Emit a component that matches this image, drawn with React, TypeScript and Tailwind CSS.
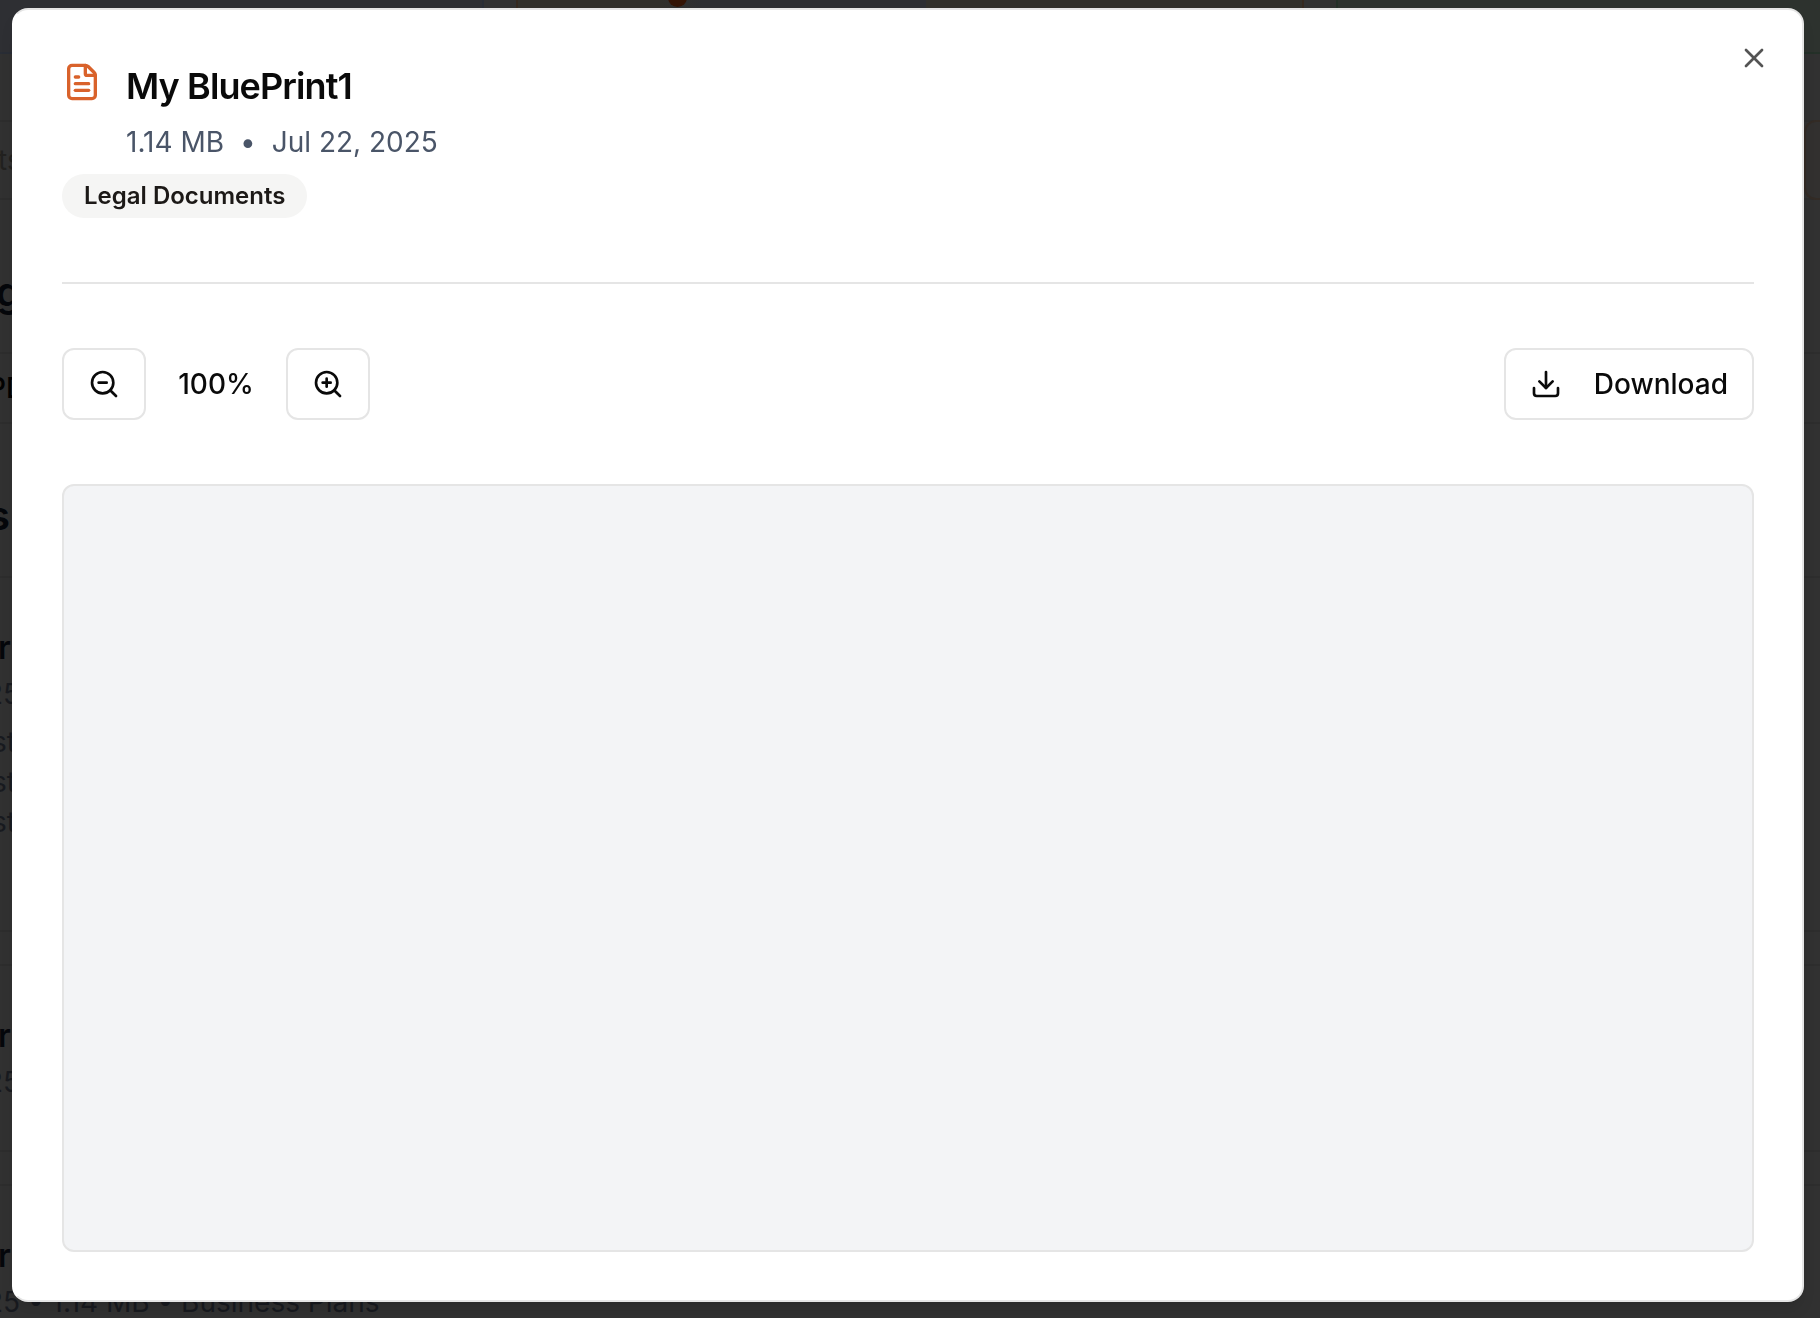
import { Download, FileText, X, ZoomIn, ZoomOut } from "lucide-react";

const lines = ["st", "st", "st"];

function Backdrop() {
  return (
    <div aria-hidden="true" className="flex h-screen flex-col overflow-hidden whitespace-nowrap bg-[#313131] text-[28px] leading-10 text-[#181a1f]">
      <div className="flex h-[54px] shrink-0 justify-center gap-8">
        <div className="w-[788px] shrink-0 border-2 border-t-0 border-[#292d35] bg-[#2e2f33]" />
        <div className="flex w-[788px] shrink-0 border-2 border-t-0 border-[#35291f] bg-[#32302b]">
          <div className="flex w-[408px] bg-gradient-to-r from-[#32302b] from-35% to-[#2d2e32] to-45% pl-[150px]">
            <div className="-mt-3 size-[19px] rounded-full bg-[#341405]" />
          </div>
        </div>
        <div className="w-[788px] shrink-0 border-2 border-t-0 border-[#243028] bg-[#2d322e]" />
      </div>
      <div className="h-[68px] shrink-0 border-b-2 border-[#2d2d2d]" />
      <div className="flex h-[78px] shrink-0 items-center justify-between border-b-2 border-[#2d2d2d] text-[#22211f]">
        <span className="-ml-0.5">ts</span>
        <span className="h-20 w-4 shrink-0 rounded-l-xl border-2 border-r-0 border-[#332b25] bg-[#32302f]" />
      </div>
      <div className="flex h-[154px] shrink-0 items-center border-b-2 border-[#2d2d2d] pt-8 text-[40px] font-semibold text-[#05070b]">
        <span className="-ml-1">g</span>
      </div>
      <div className="flex h-[70px] shrink-0 items-center border-b-2 border-[#2d2d2d] font-medium text-[#020202]">
        <span className="-ml-3">PD</span>
      </div>
      <div className="flex h-[154px] shrink-0 items-center border-b-2 border-[#2d2d2d] pt-8 text-[40px] font-semibold text-[#05070b]">
        <span className="-ml-3">s</span>
      </div>
      <div className="flex h-[354px] shrink-0 flex-col border-b-2 border-[#2d2d2d] pt-12">
        <span className="-ml-0.5 mb-1 text-[32px] leading-11 font-semibold text-[#05070b]">r</span>
        <span className="-ml-3.5 mb-2">25</span>
        {lines.map((line, i) => (
          <span key={i} className="-ml-2">{line}</span>
        ))}
      </div>
      <div className="h-[34px] shrink-0 border-b-2 border-[#2d2d2d]" />
      <div className="h-[186px] shrink-0 border-b-2 border-[#2d2d2d] pt-12">
        <div className="-ml-0.5 mb-1 text-[32px] leading-11 font-semibold text-[#05070b]">r</div>
        <div className="-ml-3.5">25</div>
      </div>
      <div className="h-[34px] shrink-0 border-b-2 border-[#2d2d2d]" />
      <div className="h-[186px] shrink-0 pt-12">
        <div className="-ml-0.5 mb-1 text-[32px] leading-11 font-semibold text-[#05070b]">r</div>
        <div className="-ml-3.5">25 • 1.14 MB • Business Plans</div>
      </div>
    </div>
  );
}

const outline =
  "flex h-18 items-center rounded-xl border-2 border-[#e5e5e5] bg-white px-6 text-[28px] font-medium leading-10";

export default function App() {
  return (
    <div className="font-[Inter,sans-serif] text-[#0a0a0a]">
      <Backdrop />
      <div className="fixed inset-0 flex pt-2 pr-4 pb-4 pl-3">
        <div
          role="dialog"
          aria-modal="true"
          aria-labelledby="doc-title"
          className="relative flex min-w-0 flex-1 flex-col rounded-2xl border-2 border-[#e5e5e5] border-l-white bg-white p-12 shadow-lg"
        >
          <header className="border-b-2 border-[#e5e5e5] pb-16">
            <div className="flex items-start gap-6">
              <FileText className="mt-1 size-10 shrink-0 text-[#d9622b]" />
              <div>
                <h1 id="doc-title" className="text-4xl leading-14 font-semibold tracking-tight">
                  My BluePrint1
                </h1>
                <p className="mt-2 flex gap-4 text-[28px] leading-10 text-[#4a5568]">
                  <span>1.14 MB</span>
                  <span>•</span>
                  <span>Jul 22, 2025</span>
                </p>
              </div>
            </div>
            <span className="mt-3 flex h-11 w-fit items-center rounded-full bg-[#f5f5f4] px-[22px] text-2xl font-semibold text-[#1c1917]">
              Legal Documents
            </span>
          </header>

          <div className="flex items-center justify-between py-16">
            <div className="flex items-center gap-4">
              <button type="button" aria-label="Zoom out" className={outline}>
                <ZoomOut className="size-8" />
              </button>
              <output className="w-27 text-center text-[28px] leading-10 font-medium">100%</output>
              <button type="button" aria-label="Zoom in" className={outline}>
                <ZoomIn className="size-8" />
              </button>
            </div>
            <button type="button" className={outline + " gap-8"}>
              <Download className="size-8" />
              Download
            </button>
          </div>

          <div className="min-h-0 flex-1 rounded-xl border-2 border-[#e5e5e5] bg-[#f3f4f6]" />

          <button type="button" aria-label="Close" className="absolute top-8 right-8 text-[#545454]">
            <X className="size-8" />
          </button>
        </div>
      </div>
    </div>
  );
}
